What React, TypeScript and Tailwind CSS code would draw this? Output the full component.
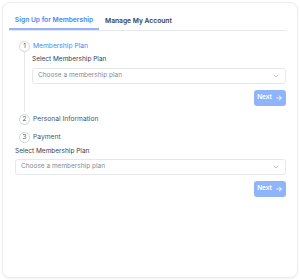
import React from "react";

function Chevron() {
  return (
    <svg width="8" height="8" viewBox="0 0 24 24" fill="none" stroke="#9ca3af" strokeWidth="2" strokeLinecap="round" strokeLinejoin="round">
      <path d="M6 9l6 6 6-6" />
    </svg>
  );
}

function Arrow() {
  return (
    <svg width="8" height="8" viewBox="0 0 24 24" fill="none" stroke="#ffffff" strokeWidth="2.5" strokeLinecap="round" strokeLinejoin="round">
      <path d="M5 12h14M13 6l6 6-6 6" />
    </svg>
  );
}

function Select() {
  return (
    <div className="h-[16px] w-full rounded-[3px] border border-[#e5e7eb] bg-white flex items-center justify-between pl-[5px] pr-[5px]">
      <span className="text-[6.5px] text-[#858a93]">Choose a membership plan</span>
      <Chevron />
    </div>
  );
}

function NextBtn() {
  return (
    <div className="flex justify-end">
      <div className="w-[32px] h-[16px] rounded-[3px] bg-[#8fb4fa] flex items-center justify-center gap-[3px] text-white text-[6.5px] font-semibold">
        Next <Arrow />
      </div>
    </div>
  );
}

function Circle({ n }: { n: number }) {
  return (
    <div className="w-[11px] h-[11px] rounded-full border border-[#d1d5db] bg-white flex items-center justify-center text-[6.5px] text-[#4b5563] shrink-0">
      {n}
    </div>
  );
}

export default function App() {
  return (
    <div className="w-[300px] h-[280px] bg-white p-[2px]" style={{ fontFamily: "Inter, 'Noto Sans', sans-serif" }}>
      <div className="h-[276px] rounded-[8px] border border-[#eeeeee] shadow-[0_1px_2px_rgba(0,0,0,0.06)] bg-white px-[6px]">
        <div className="flex border-b border-[#e5e7eb] mt-[9px] mr-[4px]">
          <div className="w-[90px] h-[18px] flex items-center justify-center border-b-2 border-[#93b4fa] -mb-px text-[6.7px] font-semibold text-[#4a86f5]">
            Sign Up for Membership
          </div>
          <div className="ml-[6px] h-[18px] flex items-center text-[6.7px] font-semibold text-[#374151]">
            Manage My Account
          </div>
        </div>
        <div className="pl-[10px] pr-[5px] pt-[10px]">
          <div className="flex items-center gap-[3px] h-[11px]">
            <Circle n={1} />
            <span className="text-[6.7px] text-[#4a86f5]">Membership Plan</span>
          </div>
          <div className="ml-[5px] border-l border-[#e5e7eb] pl-[7px] pt-[3px] pb-[6px]">
            <div className="text-[6.5px] text-[#374151] h-[9px] leading-[9px]">Select Membership Plan</div>
            <div className="mt-[4px]"><Select /></div>
            <div className="mt-[6px]"><NextBtn /></div>
          </div>
          <div className="flex items-center gap-[3px] h-[11px] mt-[2px]">
            <Circle n={2} />
            <span className="text-[6.7px] text-[#4b5563]">Personal Information</span>
          </div>
          <div className="flex items-center gap-[3px] h-[11px] mt-[7px]">
            <Circle n={3} />
            <span className="text-[6.7px] text-[#4b5563]">Payment</span>
          </div>
        </div>
        <div className="pl-[6px] pr-[5px] pt-[4px]">
          <div className="text-[6.5px] text-[#374151] h-[9px] leading-[9px]">Select Membership Plan</div>
          <div className="mt-[3px]"><Select /></div>
          <div className="mt-[6px]"><NextBtn /></div>
        </div>
      </div>
    </div>
  );
}
